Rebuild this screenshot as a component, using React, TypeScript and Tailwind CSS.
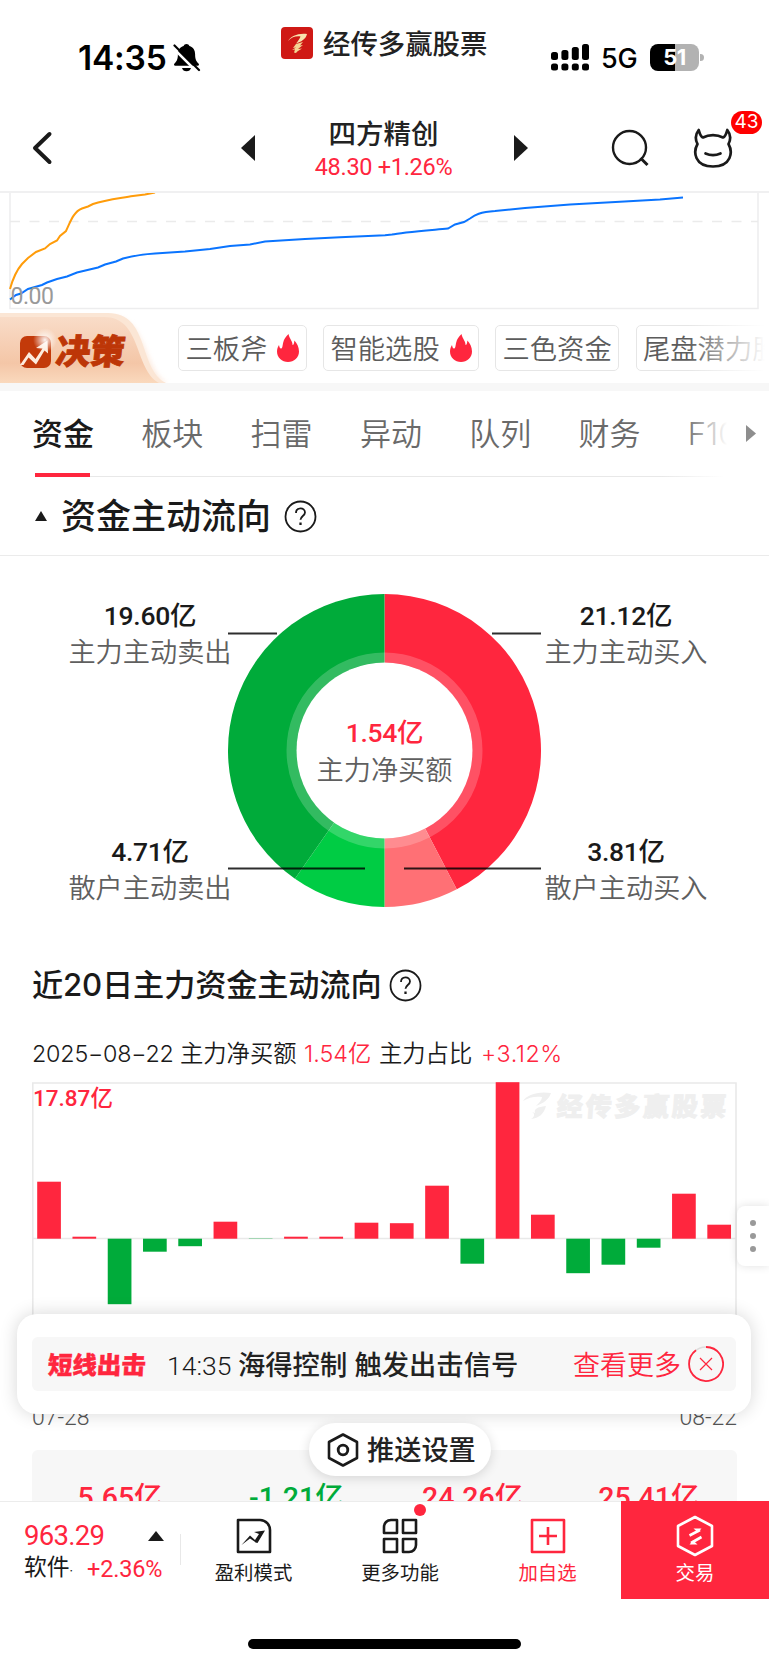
import React from "react";

const CJK = "font-['Inter','Noto_Sans_CJK_SC',sans-serif]";
const DIN = "font-['Roboto','Noto_Sans_CJK_SC',sans-serif] [font-stretch:88%]";

function StatusBar() {
  return (
    <div className="flex h-[96px] shrink-0 items-start">
      <div className="ml-[78px] mt-[38px] w-[92px] text-[33.500px] font-semibold leading-[40px] tracking-[-0.200px] text-black">14:35</div>
      <svg className="ml-[3px] mt-[43px]" width="28" height="29" viewBox="0 0 28 29">
        <path d="M13.500 1c1.400 0 2.500.8 2.900 1.900 3.900 1 5.700 4.300 5.700 8.100 0 5.500 1.200 7.200 3.400 9.600.9 1 .5 2.200-.8 2.200H2.300c-1.300 0-1.700-1.200-.8-2.200C3.700 18.200 4.900 16.500 4.900 11c0-3.800 1.800-7.100 5.700-8.100C11 1.800 12.100 1 13.500 1z" fill="#000" />
        <path d="M9 25h9c-.5 2-2.200 3.300-4.500 3.300S9.500 27 9 25z" fill="#000" />
        <path d="M-.5 4.500 24 29" stroke="#fff" strokeWidth="2.500" />
        <path d="M1.500 2.500 26 27" stroke="#000" strokeWidth="2.200" strokeLinecap="round" />
      </svg>
      <svg className="ml-[80px] mt-[27px]" width="32" height="32" viewBox="0 0 32 32">
        <rect width="32" height="32" rx="4" fill="#cf1915" />
        <path d="M7 14c3-5 10-8 19-7-1 5-6 8-11 9.500 2-2.500 4-5 4.500-7C15 8.800 11 10 7 14z" fill="#f8e3ae" />
        <path d="M15 17l7-2-3 3.500 3-.5-5 4 4-.5c-2 1.500-4.500 2-6 4.500l-2-.5 1-3-3 .5 4-2.500-3 .5z" fill="#f3d694" />
      </svg>
      <div className="ml-[10px] mt-[25px] w-[169px] whitespace-nowrap text-[27.400px] font-medium leading-[38px] text-[#222]">经传多赢股票</div>
      <svg className="ml-[59px] mt-[44px]" width="39" height="27" viewBox="0 0 39 27">
        <rect x="0" y="8" width="7" height="8" rx="2.500" />
        <rect x="10.400" y="6" width="7" height="10" rx="2.500" />
        <rect x="20.800" y="3" width="7" height="13" rx="2.500" />
        <rect x="31" y="0" width="7" height="16" rx="2.500" />
        <rect x="0" y="19.500" width="7" height="7" rx="2.500" />
        <rect x="10.400" y="19.500" width="7" height="7" rx="2.500" />
        <rect x="20.800" y="19.500" width="7" height="7" rx="2.500" />
        <rect x="31" y="19.500" width="7" height="7" rx="2.500" />
      </svg>
      <div className="ml-[11px] mt-[39px] w-[38px] text-[27px] font-medium leading-[40px] tracking-[-0.300px] text-black">5G</div>
      <div className="relative ml-[11px] mt-[44px] flex h-[27px] w-[49px] items-center justify-center rounded-[8px] bg-[linear-gradient(90deg,#000_52%,#b2b2b2_52%)] text-[22px] font-bold leading-[27px] tracking-[-0.500px] text-white">
        51
        <div className="absolute -right-[5px] top-[10px] h-[7px] w-[4px] rounded-r-full bg-[#b2b2b2]" />
      </div>
    </div>
  );
}

function Header() {
  return (
    <div className="flex h-[97px] shrink-0 border-b-2 border-[#f0f0f1]">
      <svg className="ml-[31px] mt-[35px]" width="22" height="34" viewBox="0 0 22 34">
        <path d="M18.500 3 4 17l14.500 14" fill="none" stroke="#1a1a1a" strokeWidth="4" strokeLinecap="round" strokeLinejoin="round" />
      </svg>
      <svg className="ml-[188px] mt-[39px]" width="14" height="26" viewBox="0 0 14 26"><path d="M14 0v26L0 13z" fill="#1a1a1a" /></svg>
      <div className="ml-[38px] mt-[19px] flex w-[181px] flex-col items-center">
        <div className="whitespace-nowrap text-[27.500px] font-medium leading-[38px] text-[#222]">四方精创</div>
        <div className={`${DIN} mt-px whitespace-nowrap text-[23.500px] leading-[26px] tracking-[-0.300px] text-[#ff263e]`}>48.30 +1.26%</div>
      </div>
      <svg className="ml-[40px] mt-[39px]" width="14" height="26" viewBox="0 0 14 26"><path d="M0 0v26l14-13z" fill="#1a1a1a" /></svg>
      <svg className="ml-[83px] mt-[33px]" width="40" height="40" viewBox="0 0 40 40" fill="none" stroke="#1a1a1a" strokeWidth="2.400">
        <circle cx="18.500" cy="15.500" r="16.500" transform="translate(0 3)" />
        <path d="M29.500 29l7 7" strokeWidth="3" />
      </svg>
      <div className="relative ml-[41px] mt-[32px] h-[42px] w-[42px]">
        <svg width="42" height="42" viewBox="0 0 42 42" fill="none" stroke="#1a1a1a" strokeWidth="2.700" strokeLinejoin="round" strokeLinecap="round">
          <path d="M11 9.500c6-3.200 14-3.200 20 0 2.500-1 3.300-4 4.300-7.500 3.200 4 3.500 9.500 1.200 14 4.500 8 3 22.500-15.500 22.500S1 24 5.500 16C3.200 11.500 3.500 6 6.700 2c1 3.500 1.800 6.500 4.300 7.500z" />
          <path d="M13.500 25.500c4.500 2 10.500 2 15 0" />
        </svg>
        <div className="absolute left-[39px] top-[-17px] flex h-[23px] w-[31px] items-center justify-center rounded-full bg-[#ff0000] text-[19px] text-white">43</div>
      </div>
    </div>
  );
}

function TrendChart() {
  return (
    <svg className="block shrink-0" width="769" height="120" viewBox="0 193 769 120">
      <path d="M10 193V308.500H758V193" fill="none" stroke="#ededee" strokeWidth="1.500" />
      <path d="M10 221.500H758" stroke="#ebebeb" strokeWidth="1.300" strokeDasharray="10 9.500" />
      <path d="M10 289C13 278 16 271 22 264L28 258 36 252 45 248.500 50 244 57 240.500 60 236 66 231C70 223 73 212 82 208.500L88 206.500 93 204C105 200 119 198.500 133 196L145 194.500 155 192.500" fill="none" stroke="#ff9c0a" strokeWidth="2" />
      <path d="M10 299.500L16 295 21 293.500 28 289 42 285 47 282.500 57 279 67 276.500 77 272.500 98 267.500 105 264.500 116 261.500 123 258.500C133 256 145 254 155 253.500L185 251.500 210 249 230 246 250 244.500 265 241.500 305 239 340 237.300 385 235.200 392 234.500C400 232.500 420 231 448 228.500L455 224.500 464 222 470 218.500C475 215 480 212 495 211L525 208 570 204.500 620 201.800 660 199.500 683 197.500" fill="none" stroke="#0a74ff" strokeWidth="2" />
      <text x="10.500" y="304" fontSize="23" letterSpacing="-0.500" fill="#999" fontFamily="Roboto">0.00</text>
    </svg>
  );
}

function Flame() {
  return (
    <svg className="ml-[10px] shrink-0" width="22" height="28" viewBox="0 0 22 28">
      <path d="M11.500 0c1 5 4 7 4 10.500 0 1 .8.500 1.200-.5.600-1.500.5-2.500.7-3.500 2.500 2.800 4.600 6.500 4.600 11C22 23.500 17 28 11 28S0 23.500 0 17.500c0-2.500.8-4.800 2-6.500.3 1.800 1 3.800 2.200 3.500 1.500-.5 1.300-3.500 2-6C7 5 8.800 2.500 11.500 0z" fill="#ff263e" />
    </svg>
  );
}

const chip = "flex h-[46px] shrink-0 items-center whitespace-nowrap rounded-[5px] border-[1.500px] border-[#e6e6e6] pl-[6.500px] text-[27.300px] font-[350] leading-[38px] text-[#5c5c5c]";

function Chips() {
  return (
    <div className="flex h-[70px] shrink-0 overflow-hidden">
      <div className="relative h-[70px] w-[178px] shrink-0">
        <svg className="absolute left-0 top-0" width="178" height="70" viewBox="0 0 178 70">
          <defs>
            <linearGradient id="tab" x1="0" y1="0" x2="0" y2="1">
              <stop offset="0" stopColor="#f9dcc8" />
              <stop offset="0.700" stopColor="#f4c6a7" />
              <stop offset="1" stopColor="#fad9bd" />
            </linearGradient>
            <radialGradient id="shine" cx="0.500" cy="0.500" r="0.500">
              <stop offset="0" stopColor="#fff" stopOpacity="0.950" />
              <stop offset="1" stopColor="#fff" stopOpacity="0" />
            </radialGradient>
            <filter id="soft"><feGaussianBlur stdDeviation="2.500" /></filter>
          </defs>
          <path d="M0 3H110C148 3 144 60 168 70H0z" fill="#fbe3d2" filter="url(#soft)" opacity="0.700" />
          <path d="M0 0H108C150 0 138 56 166 70H0z" fill="#fbe6d5" />
          <path d="M0 4H104C142 4 134 56 159 70H0z" fill="url(#tab)" />
          <rect x="20" y="23" width="31" height="32" rx="7" fill="#c33a0a" />
          <path d="M20 52l9-13 6.500 7 7-10.500-6.500-.5 11.500-7.500.5 13-3.500-3-8.500 14-7.500-7-5 7.500z" fill="#fdebdd" />
          <circle cx="45" cy="27" r="12" fill="url(#shine)" />
        </svg>
        <div className="relative ml-[56px] mt-[18px] -skew-x-6 whitespace-nowrap text-[34.500px] font-black leading-[42px] text-[#bd3607] [-webkit-text-stroke:0.800px_#bd3607]">决策</div>
      </div>
      <div className="relative mt-[12px] flex h-[46px] w-[591px] gap-[16.500px] overflow-hidden">
        <div className={`${chip} w-[128.500px]`}><span className="mt-[3px]">三板斧</span><Flame /></div>
        <div className={`${chip} w-[155.500px]`}><span className="mt-[3px]">智能选股</span><Flame /></div>
        <div className={`${chip} w-[124px]`}><span className="mt-[3px]">三色资金</span></div>
        <div className={`${chip} w-[160px]`}><span className="mt-[3px]">尾盘潜力股</span></div>
        <div className="absolute right-0 top-0 h-full w-[82px] bg-gradient-to-r from-white/0 to-white to-95%" />
      </div>
    </div>
  );
}

const tabs = ["资金", "板块", "扫雷", "异动", "队列", "财务", "F10"];

function Tabs() {
  return (
    <div className="relative flex h-[86px] shrink-0 pl-[32px]">
      {tabs.map((t, i) => (
        <div key={t} className={i === 0 ? "h-[86px] w-[109.300px] shrink-0 pt-[22px] text-[31px] font-medium leading-[42px] text-[#1a1a1a]" : "h-[86px] w-[109.300px] shrink-0 pt-[22px] text-[31px] font-[350] leading-[42px] text-[#6a6a6a]"}>
          {t}
          {i === 0 && <div className="ml-[3px] mt-[18px] h-[4px] w-[55px] bg-[#ff263e]" />}
        </div>
      ))}
      <div className="absolute bottom-0 left-[90px] right-[45px] h-px bg-gradient-to-r from-[#e8e8e8] from-90% to-white" />
      <div className="absolute right-0 top-0 flex h-[84px] w-[84px] items-center justify-end bg-gradient-to-r from-white/0 to-white to-50% pr-[13px]">
        <svg width="10" height="17" viewBox="0 0 10 17"><path d="M0 0l10 8.500L0 17z" fill="#8e8e8e" /></svg>
      </div>
    </div>
  );
}

function Help() {
  return (
    <svg width="33" height="33" viewBox="0 0 33 33" fill="none" stroke="#1a1a1a" strokeWidth="1.800">
      <circle cx="16.500" cy="16.500" r="15" />
      <path d="M12 13c0-6 9-6 9-.5 0 3.300-4.500 3.800-4.500 7.300" />
      <path d="M16.500 22.500v2.500" strokeWidth="2.300" />
    </svg>
  );
}

function point(r: number, deg: number) {
  const a = (deg * Math.PI) / 180;
  return `${156.5 + r * Math.sin(a)} ${156.5 - r * Math.cos(a)}`;
}
function sector(r: number, a: number, b: number) {
  return `M156.500 156.500L${point(r, a)}A${r} ${r} 0 0 1 ${point(r, b)}Z`;
}

function FlowLabel({ value, name, cls }: { value: string; name: string; cls: string }) {
  return (
    <div className={`flex flex-col items-center ${cls}`}>
      <div className={`${DIN} whitespace-nowrap text-[26.500px] font-medium leading-[36px] tracking-[-0.300px] text-[#1a1a1a]`}>{value}</div>
      <div className="whitespace-nowrap text-[27.200px] font-[350] leading-[38px] text-[#5f5f5f]">{name}</div>
    </div>
  );
}

function Donut() {
  return (
    <div className="flex h-[379px] shrink-0 pt-[38px]">
      <div className="flex w-[228px] flex-col">
        <FlowLabel value="19.60亿" name="主力主动卖出" cls="ml-[68px] mt-[4px] w-[164px]" />
        <FlowLabel value="4.71亿" name="散户主动卖出" cls="ml-[68px] mt-[162px] w-[164px]" />
      </div>
      <div className="relative h-[313px] w-[313px]">
        <svg className="absolute left-0 top-0" width="313" height="313" viewBox="0 0 313 313">
          <path d={sector(156.5, 0, 152.5)} fill="#ff263e" />
          <path d={sector(156.5, 152.5, 180)} fill="#ff7075" />
          <path d={sector(156.5, 180, 214.9)} fill="#00cc44" />
          <path d={sector(156.5, 214.9, 360)} fill="#00ab3a" />
          <circle cx="156.500" cy="156.500" r="93" fill="none" stroke="#fff" strokeOpacity="0.200" strokeWidth="10" />
          <circle cx="156.500" cy="156.500" r="88" fill="#fff" />
          <path d="M0 39.500H49M264 39.500H313M0 274.500H137M176 274.500H313" stroke="#000" strokeOpacity="0.820" strokeWidth="2.200" />
        </svg>
        <div className="relative flex flex-col items-center pt-[120px]">
          <div className={`${DIN} text-[26.500px] font-medium leading-[38px] tracking-[-0.300px] text-[#ff263e]`}>1.54亿</div>
          <div className="text-[27.200px] font-[350] leading-[38px] text-[#5f5f5f]">主力净买额</div>
        </div>
      </div>
      <div className="flex w-[228px] flex-col">
        <FlowLabel value="21.12亿" name="主力主动买入" cls="ml-[3px] mt-[4px] w-[164px]" />
        <FlowLabel value="3.81亿" name="散户主动买入" cls="ml-[3px] mt-[162px] w-[164px]" />
      </div>
    </div>
  );
}

const bars = [57, 2, -65.5, -13, -7.5, 17, -0.3, 2, 2, 16, 15.5, 53, -25, 156.5, 24, -34.5, -26, -9, 45, 14];

function BarChart() {
  return (
    <div className="relative h-[300px] w-[705px]">
      <svg className="absolute left-0 top-0" width="705" height="300" viewBox="0 0 705 300">
        <path d="M0 1H704V300M0.800 1V300M0 156.500H704" fill="none" stroke="#e9e9e9" strokeWidth="1.600" />
        {bars.map((v, i) => (
          <rect key={i} x={5.2 + i * 35.27} y={v > 0 ? 156.7 - v : 156.7} width="23.700" height={Math.abs(v)} fill={v > 0 ? "#ff263e" : "#00ab3a"} />
        ))}
        <path d="M491 19c4-6 14-10 28-8-2 6-7 10-15 13 3-3 6-6 6-9-6-1-13 0-19 4zM499 37c5-3 3-6 1-7l3 1c-1-4 2-6 11-7-2 8-7 12-15 13z" fill="#efefef" />
      </svg>
      <div className={`${DIN} absolute left-[1px] top-0 whitespace-nowrap text-[22.500px] font-medium leading-[32px] text-[#ff263e]`}>17.87亿</div>
      <div className="absolute left-[525px] top-[7px] -skew-x-[4deg] whitespace-nowrap text-[26px] font-black leading-[36px] tracking-[2.700px] text-[#efefef] [-webkit-text-stroke:0.800px_#efefef]">经传多赢股票</div>
    </div>
  );
}

const stats = [
  { v: "5.65亿", c: "text-[#ff263e]" },
  { v: "-1.21亿", c: "text-[#00ab3a]" },
  { v: "24.26亿", c: "text-[#ff263e]" },
  { v: "25.41亿", c: "text-[#ff263e]" },
];

function History() {
  return (
    <div className="flex h-[566px] shrink-0 flex-col overflow-hidden pl-[32px]">
      <div className="mt-[31px] flex h-[38px] items-center">
        <div className="w-[357px] whitespace-nowrap text-[31.200px] font-medium leading-[42px] tracking-[-0.150px] text-[#1a1a1a]">近20日主力资金主动流向</div>
        <Help />
      </div>
      <div className="mt-[32px] flex h-[36px] whitespace-nowrap text-[23.300px] font-[350] leading-[36px] text-[#1a1a1a]">
        <div className="w-[148px] tracking-[-0.200px]">2025−08−22</div>
        <div className="w-[124px]">主力净买额</div>
        <div className="w-[75px] text-[#ff263e]">1.54亿</div>
        <div className="w-[102px]">主力占比</div>
        <div className="tracking-[0.550px] text-[#ff263e]">+3.12%</div>
      </div>
      <div className="mt-[10px]"><BarChart /></div>
      <div className={`${DIN} mt-[22px] flex h-[28px] w-[705px] justify-between text-[23px] font-light leading-[28px] text-[#555]`}>
        <span>07-28</span>
        <span>08-22</span>
      </div>
      <div className="mt-[18px] grid h-[120px] w-[705px] shrink-0 grid-cols-4 rounded-[6px] bg-[#f7f7f7]">
        {stats.map((s) => (
          <div key={s.v} className={`${DIN} ${s.c} pt-[28px] text-center text-[28.500px] font-medium leading-[40px]`}>{s.v}</div>
        ))}
      </div>
    </div>
  );
}

function Alert() {
  return (
    <div className="absolute left-[17px] top-[1314px] flex h-[100px] w-[734px] items-center rounded-[20px] bg-white px-[15px] shadow-[0_0_18px_rgba(0,0,0,0.160)]">
      <div className="flex h-[54px] w-[705px] items-center rounded-[6px] bg-[#f7f7f7] pl-[16px]">
        <div className="mt-[2px] w-[119px] -skew-x-3 whitespace-nowrap text-[24.500px] font-black leading-[36px] text-[#ff263e] [-webkit-text-stroke:0.400px_#ff263e]">短线出击</div>
        <div className={`${DIN} mt-[3px] w-[71px] whitespace-nowrap text-[26.500px] font-light leading-[38px] text-[#1a1a1a]`}>14:35</div>
        <div className="mt-[4px] w-[335px] whitespace-nowrap text-[27.300px] font-medium leading-[38px] text-[#222]">海得控制 触发出击信号</div>
        <div className="mt-[4px] w-[115px] whitespace-nowrap text-[27px] font-[350] leading-[38px] text-[#ff263e]">查看更多</div>
        <svg width="36" height="36" viewBox="0 0 36 36" fill="none" stroke="#ff263e">
          <circle cx="18" cy="18" r="17" stroke="#ddd" strokeWidth="1.500" />
          <path d="M18 1A17 17 0 1 1 8 4.300" strokeWidth="1.800" />
          <path d="M12 12l12 12M24 12L12 24" strokeWidth="1.200" />
        </svg>
      </div>
    </div>
  );
}

function PushSettings() {
  return (
    <div className="absolute left-[309px] top-[1423px] flex h-[53px] w-[182px] items-center rounded-full bg-white pl-[18px] shadow-[0_2px_12px_rgba(0,0,0,0.140)]">
      <svg width="32" height="34" viewBox="0 0 32 34" fill="none" stroke="#1a1a1a" strokeWidth="2.600" strokeLinejoin="round">
        <path d="M16 1.500 30 9v16L16 32.500 2 25V9z" />
        <circle cx="16" cy="17" r="4.800" strokeWidth="2.800" />
      </svg>
      <div className="ml-[8px] mt-[3px] whitespace-nowrap text-[27.200px] font-medium leading-[38px] text-[#222]">推送设置</div>
    </div>
  );
}

const navLabel = "mt-[5px] whitespace-nowrap text-[19.400px] leading-[28px]";

function BottomBar() {
  return (
    <div className="relative flex h-[98px] shrink-0 border-t border-[#ececec] bg-white">
      <div className="flex w-[180px] flex-col pl-[24px] pt-[16px]">
        <div className="flex h-[36px] items-center">
          <div className={`${DIN} w-[124px] text-[27.500px] font-[450] leading-[34px] tracking-[-0.700px] text-[#ff263e]`}>963.29</div>
          <svg width="16" height="10" viewBox="0 0 16 10"><path d="M8 0l8 10H0z" fill="#1a1a1a" /></svg>
        </div>
        <div className="mt-[-1px] flex h-[32px] items-center">
          <div className="w-[63px] whitespace-nowrap text-[22.800px] leading-[32px] text-[#1a1a1a]">软件<span className="text-[12px]">·</span></div>
          <div className={`${DIN} whitespace-nowrap text-[23.500px] leading-[32px] tracking-[-0.200px] text-[#ff263e]`}>+2.36%</div>
        </div>
      </div>
      <div className="mt-[32px] h-[31px] w-px bg-[#e8e8e8]" />
      <div className="flex w-[145px] flex-col items-center pt-[16px] text-[#1a1a1a]">
        <svg width="36" height="36" viewBox="0 0 36 36" fill="none" stroke="#1a1a1a" strokeWidth="2.600" strokeLinejoin="round">
          <path d="M2 2H24C30 2 34 7 34 12V34H2z" />
          <path d="M5.500 27 14 17.500 19 22 23 16l-5-2 11-1.500L21.500 25l-2-.5-1-1-4.500-3z" fill="#1a1a1a" stroke="none" />
        </svg>
        <div className={navLabel}>盈利模式</div>
      </div>
      <div className="relative flex w-[148px] flex-col items-center pt-[16px] text-[#1a1a1a]">
        <svg width="36" height="36" viewBox="0 0 36 36" fill="none" stroke="#1a1a1a" strokeWidth="2.600" strokeLinejoin="round">
          <path d="M9 2h6v13H2V9c0-4 3-7 7-7zM21 2h13v13H21zM2 21h13v13H2zM21 21h13v6c0 4-3 7-7 7h-6z" />
        </svg>
        <div className={navLabel}>更多功能</div>
        <div className="absolute left-[88px] top-[2px] h-[12px] w-[12px] rounded-full bg-[#ff263e]" />
      </div>
      <div className="flex w-[147px] flex-col items-center pt-[16px] text-[#ff263e]">
        <svg width="36" height="36" viewBox="0 0 36 36" fill="none" stroke="#ff263e" strokeWidth="2.600" strokeLinejoin="round">
          <path d="M2 2h32v32H2zM18 9v18M9 18h18" />
        </svg>
        <div className={navLabel}>加自选</div>
      </div>
      <div className="-mt-px flex w-[148px] flex-col items-center bg-[#ff263e] pt-[14px] text-white">
        <svg width="38" height="42" viewBox="0 0 38 42" fill="none" stroke="#fff" strokeWidth="2.600" strokeLinejoin="round">
          <path d="M19 2 36 11v20L19 40 2 31V11z" />
          <path d="M13.500 20.500 24 15M25.500 22 15 28" strokeWidth="2.600" />
          <path d="M17.500 13.500h8l-3.500 4zM21.500 29.500h-8l3.500-4z" fill="#fff" stroke="none" />
        </svg>
        <div className="mt-[2px] whitespace-nowrap text-[19.400px] leading-[28px]">交易</div>
      </div>
    </div>
  );
}

export default function App() {
  return (
    <div className={`${CJK} relative flex h-[1665px] w-[769px] flex-col overflow-hidden bg-white`}>
      <StatusBar />
      <Header />
      <TrendChart />
      <Chips />
      <div className="h-[8px] shrink-0 bg-[#f7f7f7]" />
      <Tabs />
      <div className="flex h-[79px] shrink-0 items-center border-b-[1.500px] border-[#ebebeb] pl-[35px]">
        <svg width="12" height="10" viewBox="0 0 12 10"><path d="M6 0l6 10H0z" fill="#1a1a1a" /></svg>
        <div className="ml-[14px] w-[223px] whitespace-nowrap text-[35px] font-medium leading-[44px] text-[#1a1a1a]">资金主动流向</div>
        <Help />
      </div>
      <Donut />
      <History />
      <BottomBar />
      <div className="mx-auto mt-[40px] h-[10px] w-[273px] shrink-0 rounded-full bg-black" />
      <div className="absolute right-0 top-[1206px] flex h-[60px] w-[32px] flex-col items-center justify-center gap-[7px] rounded-l-[8px] bg-white shadow-[0_0_10px_rgba(0,0,0,0.120)]">
        <div className="h-[6px] w-[6px] rounded-full bg-[#999]" />
        <div className="h-[6px] w-[6px] rounded-full bg-[#999]" />
        <div className="h-[6px] w-[6px] rounded-full bg-[#999]" />
      </div>
      <Alert />
      <PushSettings />
    </div>
  );
}
